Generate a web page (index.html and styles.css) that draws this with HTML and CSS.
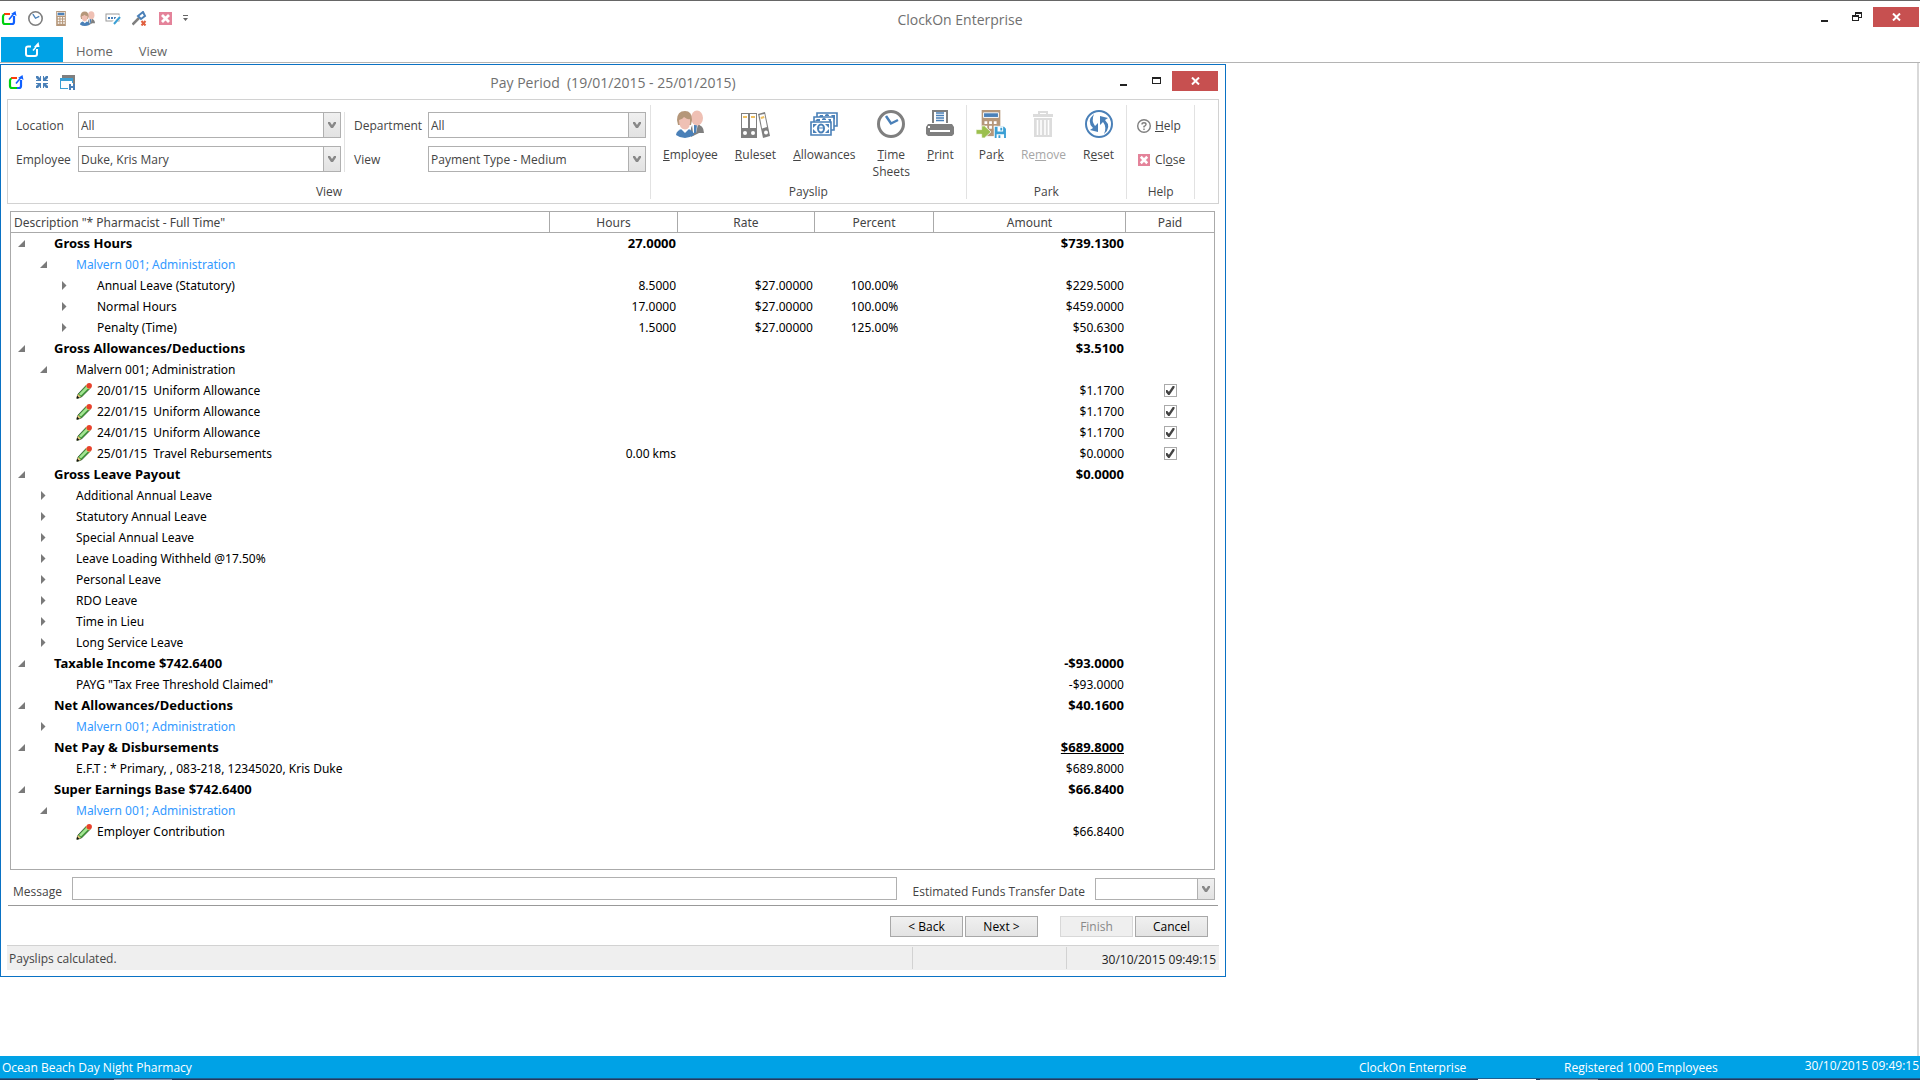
FILE: index.html
```
<!DOCTYPE html>
<html lang="en">

<head>
    <meta charset="UTF-8">
    <meta name="viewport" content="width=device-width, initial-scale=1.0">
    <title>ClockOn Enterprise</title>
    <link rel="stylesheet" href="styles.css">
</head>

<body>
<!-- shared icons -->
<svg class="defs" aria-hidden="true">
    <symbol id="logo" viewBox="0 0 16 16">
        <path d="M3 4H9" stroke="#ff3b0a" stroke-width="2" fill="none"/>
        <path d="M3.5 4.5Q2 5 2 6.500V12Q2 14 4 14H9" stroke="#00d010" stroke-width="2.200" fill="none"/>
        <path d="M9 14H11Q13 14 13 12V6" stroke="#1060ff" stroke-width="2.200" fill="none"/>
        <path d="M8 9.500L13 3.500" stroke="#1060ff" stroke-width="1.600" fill="none"/>
        <path d="M10 4L14.500 1L15.500 6L13 4.500Z" fill="#1060ff"/>
    </symbol>
    <symbol id="logo-white" viewBox="0 0 16 16">
        <g stroke="#fff" stroke-width="2" fill="none">
            <path d="M7 4.500H4Q2 4.500 2 6.500V12Q2 14 4 14H11Q13 14 13 12V7"/>
            <path d="M9 8.500L12 5" stroke-width="1.500"/>
        </g>
        <path d="M10 5L14.500 0L15.500 5Z" fill="#fff"/>
    </symbol>
    <symbol id="clock" viewBox="0 0 28 28">
        <circle cx="14" cy="14" r="12.500" fill="#fff" stroke="#7f7f7f" stroke-width="3"/>
        <path d="M9 6L14 13.500L21 10" fill="none" stroke="#4a80b8" stroke-width="2.500"/>
    </symbol>
    <symbol id="calc" viewBox="0 0 20 28">
        <rect x="1" y="0" width="18" height="28" fill="#b5977a"/>
        <rect x="3" y="3" width="14" height="5" fill="#4a80b8" stroke="#fff"/>
        <g fill="#fff">
            <path d="M4 11h3v3h-3zM9 11h3v3h-3zM14 11h3v3h-3zM4 16h3v3h-3zM9 16h3v3h-3zM14 16h3v3h-3zM4 21h3v3h-3zM9 21h3v3h-3zM14 21h3v3h-3z"/>
        </g>
    </symbol>
    <symbol id="people" viewBox="0 0 28 28">
        <path d="M15 27L15 18Q16 14 20 14Q28 15 28 23Q26 23 23 23Z" fill="#7f7f7f"/>
        <path d="M16 14L22 14L20 23H17Z" fill="#fff"/>
        <path d="M18 15h3l-1 8h-2z" fill="#4a80b8"/>
        <ellipse cx="21" cy="8" rx="6" ry="7.500" fill="#efc0b4"/>
        <path d="M0 25Q0 20 9 18Q18 20 18 25Q13 28 9 28Q4 28 0 25Z" fill="#4a80b8"/>
        <path d="M5 19L9 23L13 19L11 17H7Z" fill="#fff"/>
        <path d="M1 10Q1 1 9 1Q16 1 16 10L15 15H2Z" fill="#b5977a"/>
        <path d="M3 10Q7 9 8 7Q12 10 14 9Q15 19 9 19.500Q3 19 3 10Z" fill="#efc0b4"/>
    </symbol>
    <symbol id="close-pink" viewBox="0 0 13 13">
        <rect width="13" height="13" fill="#e4839a"/>
        <path d="M3 3L10 10M10 3L3 10" stroke="#fff" stroke-width="2.800"/>
    </symbol>
    <symbol id="pencil" viewBox="0 0 16 16">
        <path d="M1 15.500L2 11L10.500 2L14 5.500L5.500 14Z" fill="#3c9a34" stroke="#2c4a2a" stroke-width=".700"/>
        <path d="M3 11L10.500 3.200L12.500 5L5 12.500Z" fill="#a4e494"/>
        <path d="M9.500 3L11.500 1L15 4.500L13 6.500Z" fill="#f0d060"/>
        <path d="M0.500 15.500L2 11L5 14Z" fill="#e8c878"/>
        <path d="M0.500 15.500L1 12.500L3.500 15Z" fill="#111"/>
        <circle cx="13.200" cy="2.800" r="2.700" fill="#e8422c"/>
    </symbol>
    <symbol id="open" viewBox="0 0 7 7">
        <path d="M7 0V7H0Z" fill="#7a7a7a"/>
    </symbol>
    <symbol id="closed" viewBox="0 0 7 9">
        <path d="M1 0L5.500 4.500L1 9Z" fill="#7a7a7a"/>
    </symbol>
    <symbol id="chevron" viewBox="0 0 8 8">
        <path d="M0 1H2L4 4L6 1H8V2.500L5 7H3L0 2.500Z" fill="#888"/>
    </symbol>
</svg>

<header class="titlebar">
    <div class="quick">
        <button class="tool" aria-label="ClockOn"><svg width="16" height="16"><use href="#logo"/></svg></button>
        <button class="tool" aria-label="Time"><svg width="15" height="15"><use href="#clock"/></svg></button>
        <button class="tool" aria-label="Payroll"><svg width="12" height="15"><use href="#calc"/></svg></button>
        <button class="tool" aria-label="Employees"><svg width="15" height="15"><use href="#people"/></svg></button>
        <button class="tool" aria-label="Rename"><svg width="16" height="14" viewBox="0 0 16 14">
            <rect x="1" y="3" width="13" height="7" fill="#fff" stroke="#9a9a9a"/>
            <path d="M3 6h2v2H3zM6 6h2v2H6zM9 6h2v2H9z" fill="#4a80b8"/>
            <path d="M15 5L8 13" stroke="#fff" stroke-width="4"/>
            <path d="M15 6L9 13" stroke="#3a9fd4" stroke-width="2"/></svg></button>
        <button class="tool" aria-label="Remove key"><svg width="15" height="15" viewBox="0 0 15 15">
            <path d="M0.500 13.500L7 7" stroke="#7f7f7f" stroke-width="2.500"/>
            <path d="M6 5L9 8L13 5L11 1Z" fill="#fff" stroke="#4a80b8" stroke-width="2"/>
            <path d="M9.500 10L13.500 14.500M13.500 10L9.500 14.500" stroke="#e06040" stroke-width="2"/></svg></button>
        <button class="tool" aria-label="Close"><svg width="13" height="13"><use href="#close-pink"/></svg></button>
        <button class="tool" aria-label="Customise"><svg width="5" height="6" viewBox="0 0 5 6">
            <path d="M0 0H5V1H0zM0 3H5L2.500 6Z" fill="#666"/></svg></button>
    </div>
    <h1 class="caption">ClockOn Enterprise</h1>
    <div class="window-buttons">
        <button class="win" aria-label="Minimise"><svg width="10" height="12" viewBox="0 0 10 12"><path d="M1 9h7v2H1z" fill="#222"/></svg></button>
        <button class="win" aria-label="Restore"><svg width="10" height="10" viewBox="0 0 10 10">
            <path d="M3 0h7v6H7V5h2V2H4v1H3zM0 3h7v6H0zM1 5v3h5V5z" fill="#222" fill-rule="evenodd"/></svg></button>
        <button class="win win-close" aria-label="Close window"><svg width="9" height="8" viewBox="0 0 9 8"><path d="M1 .500L8 7.500M8 .500L1 7.500" stroke="#fff" stroke-width="2"/></svg></button>
    </div>
</header>

<nav class="tabs">
    <a class="tab tab-app" href="#" aria-label="Application menu"><svg width="16" height="16"><use href="#logo-white"/></svg></a>
    <a class="tab" href="#">Home</a>
    <a class="tab" href="#">View</a>
</nav>

<main class="workspace">
<section class="child">
    <div class="titlebar child-title">
        <div class="quick child-quick">
            <button class="tool" aria-label="ClockOn"><svg width="16" height="16"><use href="#logo"/></svg></button>
            <button class="tool" aria-label="Shrink"><svg width="12" height="12" viewBox="0 0 12 12">
                <path d="M5 0V5H0V4H2L0 2V0H2L4 2V0zM7 0V5H12V4H10L12 2V0H10L8 2V0zM5 12V7H0V8H2L0 10V12H2L4 10V12zM7 12V7H12V8H10L12 10V12H10L8 10V12z" fill="#4a80b8"/></svg></button>
            <button class="tool" aria-label="Save layout"><svg width="15" height="15" viewBox="0 0 15 15">
                <path d="M2 0H15V9H13V3H2z" fill="#7f7f7f"/>
                <path d="M0 3H13V8H12V6H1V13H8V14H0z" fill="#3a9fd4"/>
                <path d="M9 9H15V15H9zM11 9V11H13V9zM11 13V15H13V13z" fill="#4a80b8" fill-rule="evenodd"/></svg></button>
        </div>
        <h2 class="caption">Pay Period  (19/01/2015 - 25/01/2015)</h2>
        <div class="window-buttons">
            <button class="win" aria-label="Minimise"><svg width="8" height="12" viewBox="0 0 8 12"><path d="M0 9h7v2H0z" fill="#222"/></svg></button>
            <button class="win" aria-label="Maximise"><svg width="9" height="8" viewBox="0 0 9 8"><path d="M0 0h9v7H0zM1 2v4h7V2z" fill="#222" fill-rule="evenodd"/></svg></button>
            <button class="win win-close" aria-label="Close pay period"><svg width="9" height="8" viewBox="0 0 9 8"><path d="M1 .500L8 7.500M8 .500L1 7.500" stroke="#fff" stroke-width="2"/></svg></button>
        </div>
    </div>

    <div class="ribbon">
        <div class="group group-view">
            <div class="fields">
                <div class="field-set">
                    <label for="location">Location</label>
                    <span class="combo"><select id="location"><option>All</option></select><svg class="arrow"><use href="#chevron"/></svg></span>
                    <label for="employee">Employee</label>
                    <span class="combo"><select id="employee"><option>Duke, Kris Mary</option></select><svg class="arrow"><use href="#chevron"/></svg></span>
                </div>
                <div class="field-set field-set-right">
                    <label for="department">Department</label>
                    <span class="combo"><select id="department"><option>All</option></select><svg class="arrow"><use href="#chevron"/></svg></span>
                    <label for="view">View</label>
                    <span class="combo"><select id="view"><option>Payment Type - Medium</option></select><svg class="arrow"><use href="#chevron"/></svg></span>
                </div>
            </div>
            <div class="group-name">View</div>
        </div>
        <div class="group">
            <div class="actions">
                <button class="action"><svg width="28" height="28"><use href="#people"/></svg><span><u>E</u>mployee</span></button>
                <button class="action"><svg width="30" height="28" viewBox="0 0 30 28">
                    <path d="M0 3H16V28H0z" fill="#7f7f7f"/>
                    <path d="M1 4H7V18H1zM9 4H15V18H9z" fill="#fff"/>
                    <path d="M2 6H6V8H2zM10 6H14V8H10z" fill="#f0c060"/>
                    <path d="M17 4L24 2L29 26L22 28Z" fill="#7f7f7f"/>
                    <path d="M18.500 5L23.500 4L26 17L21 18.500Z" fill="#fff"/>
                    <path d="M19.500 7L23 6L23.500 8L20 9Z" fill="#f0c060"/>
                    <circle cx="4" cy="23" r="2" fill="#fff"/><circle cx="12" cy="23" r="2" fill="#fff"/><circle cx="25" cy="22.500" r="2" fill="#fff"/></svg><span><u>R</u>uleset</span></button>
                <button class="action"><svg width="28" height="28" viewBox="0 0 28 28">
                    <g fill="#fff" stroke="#4a80b8" stroke-width="1.600">
                        <path d="M7 3H27V16H7z"/><path d="M4 7H24V20H4z"/><path d="M1 12H21V25H1z"/>
                    </g>
                    <path d="M3 14H7L3 18zM19 14H15L19 18zM3 23H7L3 19zM19 23H15L19 19zM7 9H10V11H5zM21 9V14L18 9zM10 5H13V7H9zM25 5V10L21 5z" fill="#4a80b8"/>
                    <path d="M12 9Q14 7 16 9V10H12zM15 5Q17 3 19 5V6H15z" fill="#4a80b8"/>
                    <ellipse cx="11" cy="18.500" rx="3" ry="4" fill="none" stroke="#4a80b8" stroke-width="2"/>
                    <path d="M8 18H14" stroke="#4a80b8"/></svg><span><u>A</u>llowances</span></button>
                <button class="action"><svg width="28" height="28"><use href="#clock"/></svg><span><u>T</u>ime<br>Sheets</span></button>
                <button class="action"><svg width="28" height="28" viewBox="0 0 28 28">
                    <path d="M6 0H22V13H6z" fill="#7f7f7f"/><path d="M8 2H20V13H8z" fill="#fff"/>
                    <path d="M10 3H18M10 5.500H18M10 8H18M10 10.500H18" stroke="#4a80b8" stroke-width="1.300"/>
                    <path d="M2 14H26L28 17V24L26 26H2L0 24V17Z" fill="#7f7f7f"/>
                    <path d="M4 20H24V22H4z" fill="#fff"/><path d="M2 16h2v2H2z" fill="#fff"/></svg><span><u>P</u>rint</span></button>
            </div>
            <div class="group-name">Payslip</div>
        </div>
        <div class="group">
            <div class="actions">
                <button class="action"><svg width="32" height="30" viewBox="0 0 32 30">
                    <path d="M6 0H26V28H6z" fill="#b5977a"/>
                    <path d="M8 3H24V8H8z" fill="#4a80b8" stroke="#fff"/>
                    <path d="M9 12h3v3H9zM14 12h3v3h-3zM19 12h3v3h-3zM9 17h3v3H9zM14 17h3v3h-3zM19 17h3v3h-3z" fill="#fff"/>
                    <path d="M0 21H6V17H9L16 23.500L9 30H6V26H0z" fill="#9cbf4e" stroke="#fff" stroke-width=".800"/>
                    <path d="M19 17H32V30H19z" fill="#fff"/>
                    <path d="M20 18H30L32 20V30H20z" fill="#3a9fd4"/>
                    <path d="M23 18H29V23H23zM22 26H30V30H22z" fill="#fff"/><path d="M26 19h2v3h-2zM24 27h2v3h-2z" fill="#3a9fd4"/></svg><span>Par<u>k</u></span></button>
                <button class="action" disabled><svg width="22" height="28" viewBox="0 0 22 28">
                    <path d="M6 1H16V4H14V3H8V4H6zM1 4H21V7H1zM2 8H20V27H2z" fill="#dcdcdc"/>
                    <path d="M5.500 10V25M9 10V25M13 10V25M16.500 10V25" stroke="#fff" stroke-width="1.600"/></svg><span>Re<u>m</u>ove</span></button>
                <button class="action"><svg width="28" height="28" viewBox="0 0 28 28">
                    <circle cx="14" cy="14" r="13" fill="#fff" stroke="#4a80b8" stroke-width="2"/>
                    <path d="M9 4Q1 11 8 18L5 20L13 22V13L10 16Q6 11 9 4Z" fill="#4a80b8"/>
                    <path d="M19 24Q27 17 20 10L23 8L15 6V15L18 12Q22 17 19 24Z" fill="#4a80b8"/></svg><span>R<u>e</u>set</span></button>
            </div>
            <div class="group-name">Park</div>
        </div>
        <div class="group">
            <div class="links">
                <button class="link"><svg width="14" height="14" viewBox="0 0 14 14">
                    <circle cx="7" cy="7" r="6.300" fill="#fff" stroke="#7f7f7f" stroke-width="1.400"/>
                    <path d="M5 5.500Q5 3.800 7 3.800Q9 3.800 9 5.500Q9 6.500 7 7.500V8.500" fill="none" stroke="#7f7f7f" stroke-width="1.400"/>
                    <path d="M6.300 9.500h1.400v1.500H6.300z" fill="#7f7f7f"/></svg><span><u>H</u>elp</span></button>
                <button class="link"><svg width="14" height="12"><use href="#close-pink"/></svg><span>Cl<u>o</u>se</span></button>
            </div>
            <div class="group-name">Help</div>
        </div>
    </div>

    <div class="grid">
        <table class="payslip">
            <colgroup><col class="c-desc"><col class="c-hours"><col class="c-rate"><col class="c-percent"><col class="c-amount"><col class="c-paid"></colgroup>
            <thead>
                <tr><th class="left">Description "* Pharmacist - Full Time"</th><th>Hours</th><th>Rate</th><th>Percent</th><th>Amount</th><th>Paid</th></tr>
            </thead>
            <tbody>
                <tr class="total"><td class="lv0"><svg class="toggle"><use href="#open"/></svg>Gross Hours</td><td>27.0000</td><td></td><td></td><td>$739.1300</td><td></td></tr>
                <tr class="blue"><td class="lv1"><svg class="toggle"><use href="#open"/></svg>Malvern 001; Administration</td><td></td><td></td><td></td><td></td><td></td></tr>
                <tr><td class="lv2"><svg class="toggle"><use href="#closed"/></svg>Annual Leave (Statutory)</td><td>8.5000</td><td>$27.00000</td><td>100.00%</td><td>$229.5000</td><td></td></tr>
                <tr><td class="lv2"><svg class="toggle"><use href="#closed"/></svg>Normal Hours</td><td>17.0000</td><td>$27.00000</td><td>100.00%</td><td>$459.0000</td><td></td></tr>
                <tr><td class="lv2"><svg class="toggle"><use href="#closed"/></svg>Penalty (Time)</td><td>1.5000</td><td>$27.00000</td><td>125.00%</td><td>$50.6300</td><td></td></tr>
                <tr class="total"><td class="lv0"><svg class="toggle"><use href="#open"/></svg>Gross Allowances/Deductions</td><td></td><td></td><td></td><td>$3.5100</td><td></td></tr>
                <tr><td class="lv1"><svg class="toggle"><use href="#open"/></svg>Malvern 001; Administration</td><td></td><td></td><td></td><td></td><td></td></tr>
                <tr><td class="leaf"><svg class="pencil"><use href="#pencil"/></svg>20/01/15  Uniform Allowance</td><td></td><td></td><td></td><td>$1.1700</td><td><input type="checkbox" aria-label="Paid 20/01/15" checked></td></tr>
                <tr><td class="leaf"><svg class="pencil"><use href="#pencil"/></svg>22/01/15  Uniform Allowance</td><td></td><td></td><td></td><td>$1.1700</td><td><input type="checkbox" aria-label="Paid 22/01/15" checked></td></tr>
                <tr><td class="leaf"><svg class="pencil"><use href="#pencil"/></svg>24/01/15  Uniform Allowance</td><td></td><td></td><td></td><td>$1.1700</td><td><input type="checkbox" aria-label="Paid 24/01/15" checked></td></tr>
                <tr><td class="leaf"><svg class="pencil"><use href="#pencil"/></svg>25/01/15  Travel Rebursements</td><td>0.00 kms</td><td></td><td></td><td>$0.0000</td><td><input type="checkbox" aria-label="Paid 25/01/15" checked></td></tr>
                <tr class="total"><td class="lv0"><svg class="toggle"><use href="#open"/></svg>Gross Leave Payout</td><td></td><td></td><td></td><td>$0.0000</td><td></td></tr>
                <tr><td class="lv1"><svg class="toggle"><use href="#closed"/></svg>Additional Annual Leave</td><td></td><td></td><td></td><td></td><td></td></tr>
                <tr><td class="lv1"><svg class="toggle"><use href="#closed"/></svg>Statutory Annual Leave</td><td></td><td></td><td></td><td></td><td></td></tr>
                <tr><td class="lv1"><svg class="toggle"><use href="#closed"/></svg>Special Annual Leave</td><td></td><td></td><td></td><td></td><td></td></tr>
                <tr><td class="lv1"><svg class="toggle"><use href="#closed"/></svg>Leave Loading Withheld @17.50%</td><td></td><td></td><td></td><td></td><td></td></tr>
                <tr><td class="lv1"><svg class="toggle"><use href="#closed"/></svg>Personal Leave</td><td></td><td></td><td></td><td></td><td></td></tr>
                <tr><td class="lv1"><svg class="toggle"><use href="#closed"/></svg>RDO Leave</td><td></td><td></td><td></td><td></td><td></td></tr>
                <tr><td class="lv1"><svg class="toggle"><use href="#closed"/></svg>Time in Lieu</td><td></td><td></td><td></td><td></td><td></td></tr>
                <tr><td class="lv1"><svg class="toggle"><use href="#closed"/></svg>Long Service Leave</td><td></td><td></td><td></td><td></td><td></td></tr>
                <tr class="total"><td class="lv0"><svg class="toggle"><use href="#open"/></svg>Taxable Income $742.6400</td><td></td><td></td><td></td><td>-$93.0000</td><td></td></tr>
                <tr><td class="leaf">PAYG "Tax Free Threshold Claimed"</td><td></td><td></td><td></td><td>-$93.0000</td><td></td></tr>
                <tr class="total"><td class="lv0"><svg class="toggle"><use href="#open"/></svg>Net Allowances/Deductions</td><td></td><td></td><td></td><td>$40.1600</td><td></td></tr>
                <tr class="blue"><td class="lv1"><svg class="toggle"><use href="#closed"/></svg>Malvern 001; Administration</td><td></td><td></td><td></td><td></td><td></td></tr>
                <tr class="total"><td class="lv0"><svg class="toggle"><use href="#open"/></svg>Net Pay &amp; Disbursements</td><td></td><td></td><td></td><td><u>$689.8000</u></td><td></td></tr>
                <tr><td class="leaf">E.F.T : * Primary, , 083-218, 12345020, Kris Duke</td><td></td><td></td><td></td><td>$689.8000</td><td></td></tr>
                <tr class="total"><td class="lv0"><svg class="toggle"><use href="#open"/></svg>Super Earnings Base $742.6400</td><td></td><td></td><td></td><td>$66.8400</td><td></td></tr>
                <tr class="blue"><td class="lv1"><svg class="toggle"><use href="#open"/></svg>Malvern 001; Administration</td><td></td><td></td><td></td><td></td><td></td></tr>
                <tr><td class="leaf"><svg class="pencil"><use href="#pencil"/></svg>Employer Contribution</td><td></td><td></td><td></td><td>$66.8400</td><td></td></tr>
            </tbody>
        </table>
    </div>

    <div class="message-row">
        <label for="message">Message</label>
        <input type="text" id="message" class="message">
        <label for="transferDate">Estimated Funds Transfer Date</label>
        <span class="combo combo-date"><select id="transferDate"><option></option></select><svg class="arrow"><use href="#chevron"/></svg></span>
    </div>

    <div class="wizard">
        <button class="btn">&lt; Back</button>
        <button class="btn">Next &gt;</button>
        <button class="btn btn-finish" disabled>Finish</button>
        <button class="btn">Cancel</button>
    </div>

    <div class="status">
        <span class="status-text">Payslips calculated.</span>
        <span class="status-blank"></span>
        <span class="status-time">30/10/2015 09:49:15</span>
    </div>
</section>
</main>

<footer class="footer">
    <span class="company">Ocean Beach Day Night Pharmacy</span>
    <span class="product">ClockOn Enterprise</span>
    <span class="licence">Registered 1000 Employees</span>
    <span class="clock">30/10/2015 09:49:15</span>
</footer>
<div class="taskbar"><i class="task task-a"></i><i class="task task-b"></i><i class="task task-c"></i></div>
</body>

</html>
```
FILE: styles.css
```
* {
    box-sizing: border-box;
}

body {
    margin: 0;
    min-height: 100vh;
    display: flex;
    flex-direction: column;
    background: #fff;
    border-top: 1px solid #666;
    color: #444;
    font-family: "Open Sans", "Noto Sans", sans-serif;
    font-size: 12px;
    line-height: 17px;
}

button, input, select {
    font: inherit;
    color: inherit;
    margin: 0;
}

button {
    padding: 0;
    border: none;
    background: none;
}

svg {
    display: block;
    flex: none;
}

.defs {
    position: absolute;
    width: 0;
    height: 0;
}

/* title bars */
.titlebar {
    display: grid;
    grid-template-columns: 1fr auto 1fr;
    height: 36px;
}

.quick {
    display: flex;
    align-items: center;
    gap: 10px;
    padding: 0 0 2px 1px;
}

.tool {
    display: flex;
    justify-content: center;
    min-width: 16px;
}

.tool:last-child {
    min-width: 5px;
}

.caption {
    margin: 0;
    align-self: center;
    font-size: 14px;
    font-weight: 400;
    color: #707070;
    white-space: pre;
}

.window-buttons {
    display: flex;
    justify-content: flex-end;
    height: 20px;
    margin-top: 6px;
    padding-right: 1px;
}

.win {
    display: flex;
    align-items: center;
    justify-content: center;
    width: 32px;
}

.win-close {
    width: 46px;
    background: #c75050;
}

.child-title {
    height: 34px;
}

.child-quick {
    padding: 0 0 0 7px;
}

.child-title .window-buttons {
    padding-right: 7px;
}

/* main tabs */
.tabs {
    display: flex;
    height: 26px;
    padding-left: 1px;
    border-bottom: 1px solid #b4b4b4;
    font-size: 13px;
}

.tab {
    display: flex;
    align-items: center;
    padding: 4px 13px 0;
    color: #666;
    text-decoration: none;
}

.tab-app {
    justify-content: center;
    width: 62px;
    padding: 0;
    background: #00a2e6;
}

.workspace {
    flex: 1;
    margin-right: 1px;
    padding-top: 1px;
    border-right: 2px solid #d9d9d9;
}

/* pay period window */
.child {
    max-width: 1226px;
    padding-bottom: 6px;
    border: 1px solid #0a72c4;
}

.ribbon {
    display: flex;
    margin: 0 6px;
    padding: 5px 0 4px;
    border: 1px solid #d2d2d2;
}

.group {
    display: flex;
    flex-direction: column;
    justify-content: space-between;
    height: 94px;
    padding: 0 4px;
    border-right: 1px solid #e2e2e2;
}

.group-view {
    flex: 0 1 643px;
    padding: 0;
}

.group-name {
    text-align: center;
    line-height: 14px;
}

.fields {
    display: flex;
    padding: 7px 3px 0 8px;
}

.field-set {
    display: grid;
    grid-template-columns: 62px 263px;
    row-gap: 8px;
    align-items: center;
    padding-right: 3px;
}

.field-set-right {
    grid-template-columns: 74px 218px;
    padding: 0 0 0 9px;
    border-left: 1px solid #e2e2e2;
}

.combo {
    position: relative;
    display: block;
    height: 26px;
}

.combo select {
    width: 100%;
    height: 100%;
    padding: 0 18px 0 2px;
    border: 1px solid #b0b0b0;
    border-radius: 0;
    background: #fff;
    appearance: none;
}

/* drop-down button drawn over the select */
.arrow {
    position: absolute;
    top: 1px;
    right: 1px;
    width: 17px;
    height: calc(100% - 2px);
    padding: 4px;
    border-left: 1px solid #b0b0b0;
    background: linear-gradient(#f0f0f0, #e2e2e2);
    pointer-events: none;
}

.actions {
    display: flex;
    align-items: flex-start;
    gap: 1px;
    padding-top: 5px;
}

.action {
    display: flex;
    flex-direction: column;
    align-items: center;
    padding: 0 8px;
}

.action svg {
    height: 30px;
    margin: 0 -4px 6px;
    padding-bottom: 2px;
}

.action:disabled {
    color: #a6a6a6;
}

.links {
    display: flex;
    flex-direction: column;
    gap: 17px;
    padding: 12px 5px 0 6px;
}

.link {
    display: flex;
    align-items: center;
    gap: 4px;
}

/* payslip tree */
.grid {
    margin: 7px 10px 0 9px;
    padding-bottom: 27px;
    border: 1px solid #aaa;
    font-family: "Noto Sans", "Open Sans", sans-serif;
}

.payslip {
    width: 100%;
    table-layout: fixed;
    border-collapse: separate;
    border-spacing: 0;
    color: #000;
}

.c-hours {
    width: 128px;
}

.c-rate {
    width: 137px;
}

.c-percent {
    width: 119px;
}

.c-amount {
    width: 192px;
}

.c-paid {
    width: 88px;
}

th {
    height: 21px;
    padding: 0;
    border-right: 1px solid #aaa;
    border-bottom: 1px solid #aaa;
    color: #444;
    font-weight: 400;
}

th:last-child {
    border-right: none;
}

th.left {
    padding-left: 3px;
    text-align: left;
}

td {
    height: 21px;
    padding: 0 2px 0 0;
    line-height: 17px;
    text-align: right;
    white-space: pre;
}

td:nth-child(4), td:last-child {
    padding: 0;
    text-align: center;
}

td:first-child {
    text-align: left;
}

td.lv0 {
    padding-left: 7px;
}

td.lv1 {
    padding-left: 29px;
}

td.lv2 {
    padding-left: 50px;
}

td.leaf {
    padding-left: 65px;
}

.total td {
    font-size: 13px;
    font-weight: 700;
}

.blue td {
    color: #3399ff;
}

.toggle {
    display: inline-block;
    width: 7px;
    height: 9px;
    margin-right: 29px;
}

.pencil {
    display: inline-block;
    width: 16px;
    height: 16px;
    margin-right: 5px;
    vertical-align: middle;
}

input[type="checkbox"] {
    display: block;
    width: 13px;
    height: 13px;
    margin: 0 auto;
    padding: 1px;
    border: 1px solid #aaa;
    background: #fff;
    appearance: none;
}

input[type="checkbox"]:checked::before {
    content: "";
    display: block;
    height: 9px;
    background: #444;
    clip-path: polygon(0 45%, 20% 45%, 38% 65%, 80% 0, 100% 0, 100% 20%, 45% 100%, 30% 100%, 0 65%);
}

/* bottom of the window */
.message-row {
    display: flex;
    align-items: center;
    height: 36px;
    margin: 0 7px;
    padding: 7px 3px 5px 5px;
    border-bottom: 1px solid #999;
}

.message-row label {
    padding-top: 6px;
}

.message {
    flex: 1;
    height: 23px;
    margin: 0 16px 0 10px;
    border: 1px solid #b0b0b0;
}

.combo-date {
    width: 120px;
    height: 22px;
    margin-left: 10px;
}

.wizard {
    display: flex;
    justify-content: flex-end;
    gap: 2px;
    padding: 10px 17px 8px;
}

.btn {
    width: 73px;
    height: 21px;
    border: 1px solid #a8a8a8;
    background: linear-gradient(#f0f0f0, #e3e3e3);
    color: #000;
}

.btn-finish {
    margin-left: 20px;
}

.btn:disabled {
    border-color: #d8d8d8;
    background: #efefef;
    color: #888;
}

.status {
    display: flex;
    height: 25px;
    margin: 0 6px;
    border-top: 1px solid #d2d2d2;
    background: #efefef;
}

.status span {
    margin: 1px 0;
}

.status-text {
    flex: 1;
    padding: 3px 2px;
}

.status-blank {
    width: 154px;
    border-left: 1px solid #d2d2d2;
}

.status-time {
    width: 153px;
    padding: 4px 3px 0 0;
    border-left: 1px solid #d2d2d2;
    color: #222;
    text-align: right;
}

/* application status bar */
.footer {
    display: grid;
    grid-template-columns: 1fr 205px 260px 95px;
    align-items: center;
    height: 22px;
    padding: 0 1px 0 2px;
    background: #00a2e6;
    color: #fff;
    white-space: nowrap;
}

.clock {
    justify-self: end;
    padding-bottom: 3px;
}

.taskbar {
    display: grid;
    grid-template-columns: 58px 58px 58px;
    height: 2px;
    padding-left: 114px;
    border-top: 1px solid #1f5f8f;
    background: #203a60;
}

.task-a {
    background: #8090b0;
}

.task-b {
    margin: 0 -1306px 0 1306px;
    background: #fff;
}

.task-c {
    margin: 0 -1310px 0 1310px;
    background: #8a96a4;
}
```
